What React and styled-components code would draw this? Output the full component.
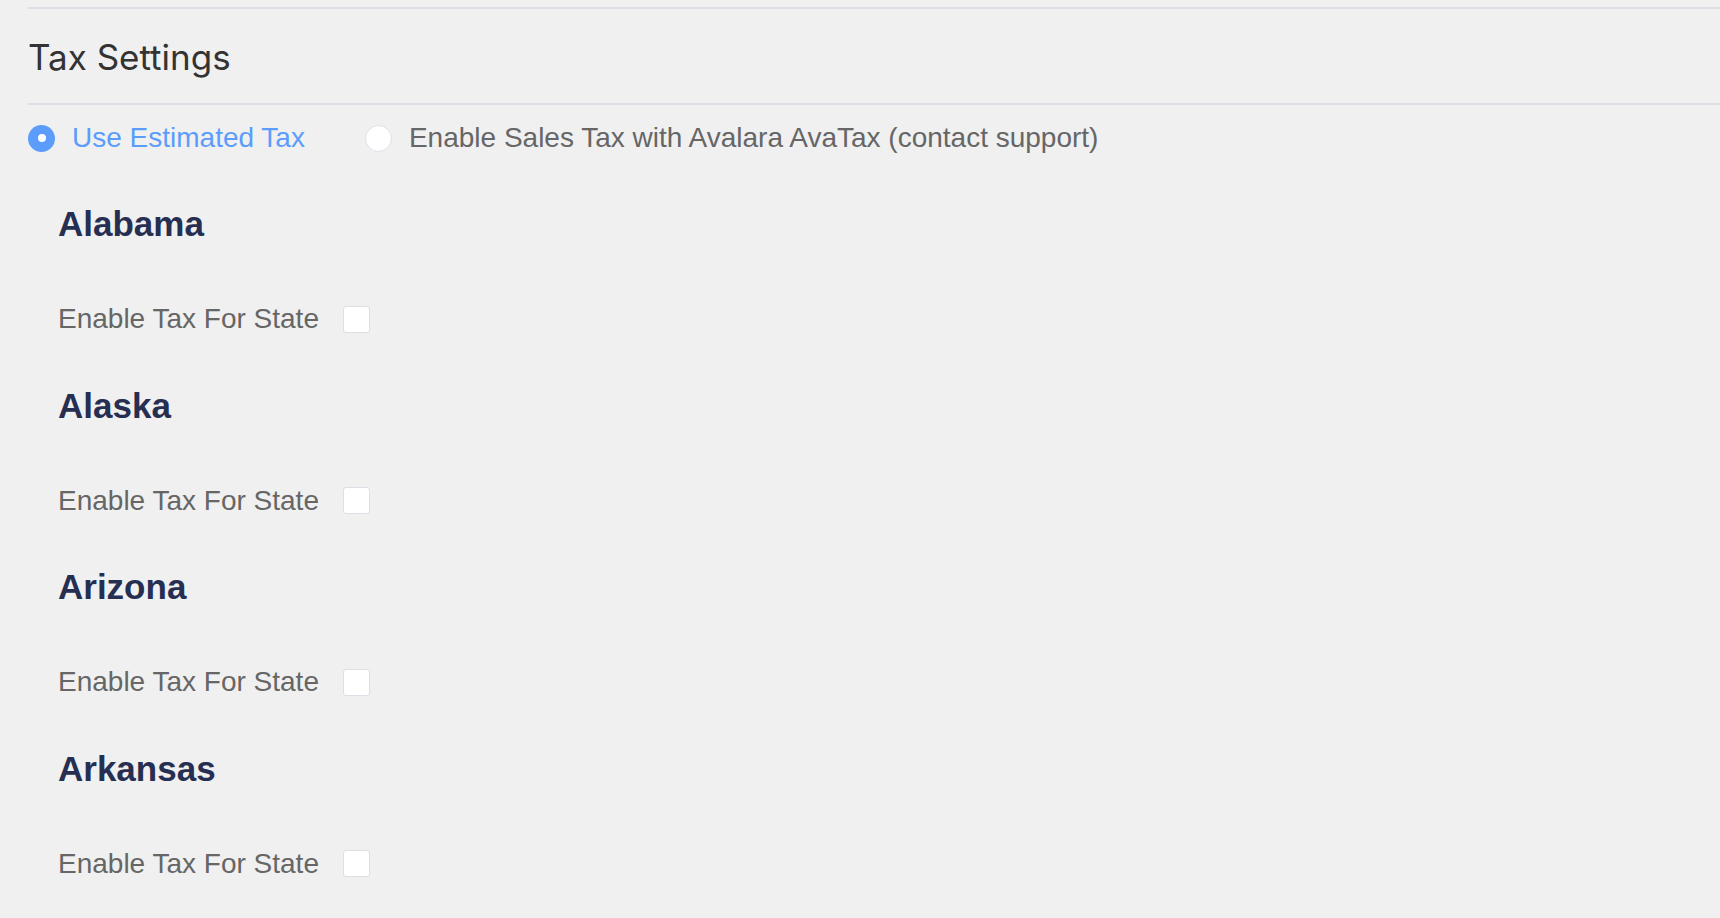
import React from "react";
import styled, { createGlobalStyle } from "styled-components";

const Global = createGlobalStyle`
  html, body { margin: 0; padding: 0; background: #f0f0f0; }
  body { font-family: "Liberation Sans", Arial, sans-serif; }
  * { box-sizing: border-box; }
`;

const Page = styled.div`
  padding: 7px 0 0 28px;
  min-height: 918px;
  background: #f0f0f0;
`;

const Header = styled.div`
  height: 98px;
  display: flex;
  align-items: center;
  padding-top: 2px;
  border-top: 2px solid #dbe0e6;
  border-bottom: 2px solid #dbe0e6;
`;

const Title = styled.h2`
  margin: 0;
  font-family: Inter, "Liberation Sans", sans-serif;
  font-weight: 400;
  font-size: 35px;
  line-height: 40px;
  color: #333333;
`;

const RadioRow = styled.div`
  display: flex;
  align-items: center;
  gap: 60px;
  height: 66px;
`;

const RadioOption = styled.label`
  display: flex;
  align-items: center;
  gap: 17px;
  font-size: 28px;
  line-height: 32px;
  color: ${(p) => (p.$checked ? "#5c9dfb" : "#666666")};
  cursor: pointer;
`;

const RadioDot = styled.span`
  width: 27px;
  height: 27px;
  border-radius: 50%;
  flex: none;
  display: flex;
  align-items: center;
  justify-content: center;
  background: ${(p) => (p.$checked ? "#5c9dfb" : "#ffffff")};
  border: ${(p) => (p.$checked ? "none" : "1.5px solid #dcdfe6")};
  &::after {
    content: "";
    width: 8px;
    height: 8px;
    border-radius: 50%;
    background: #ffffff;
    display: ${(p) => (p.$checked ? "block" : "none")};
  }
`;

const StateList = styled.div`
  padding-left: 30px;
  padding-top: 33px;
  display: flex;
  flex-direction: column;
`;

const StateBlock = styled.section`
  display: flex;
  flex-direction: column;
  gap: 55px;
  margin-bottom: 46.6px;
`;

const StateName = styled.h3`
  margin: 0;
  font-weight: 700;
  font-size: 35px;
  line-height: 40px;
  color: #262f52;
`;

const OptionRow = styled.label`
  display: flex;
  align-items: center;
  gap: 24px;
  height: 40px;
  font-size: 28px;
  color: #666666;
`;

const CheckBox = styled.span`
  width: 27px;
  height: 27px;
  flex: none;
  background: #ffffff;
  border: 1.5px solid #dcdfe6;
  border-radius: 3px;
`;

const states = ["Alabama", "Alaska", "Arizona", "Arkansas"];

export default function App() {
  return (
    <>
      <Global />
      <Page>
        <Header>
          <Title>Tax Settings</Title>
        </Header>
        <RadioRow>
          <RadioOption $checked>
            <RadioDot $checked />
            Use Estimated Tax
          </RadioOption>
          <RadioOption>
            <RadioDot />
            Enable Sales Tax with Avalara AvaTax (contact support)
          </RadioOption>
        </RadioRow>
        <StateList>
          {states.map((s) => (
            <StateBlock key={s}>
              <StateName>{s}</StateName>
              <OptionRow>
                Enable Tax For State
                <CheckBox />
              </OptionRow>
            </StateBlock>
          ))}
        </StateList>
      </Page>
    </>
  );
}
